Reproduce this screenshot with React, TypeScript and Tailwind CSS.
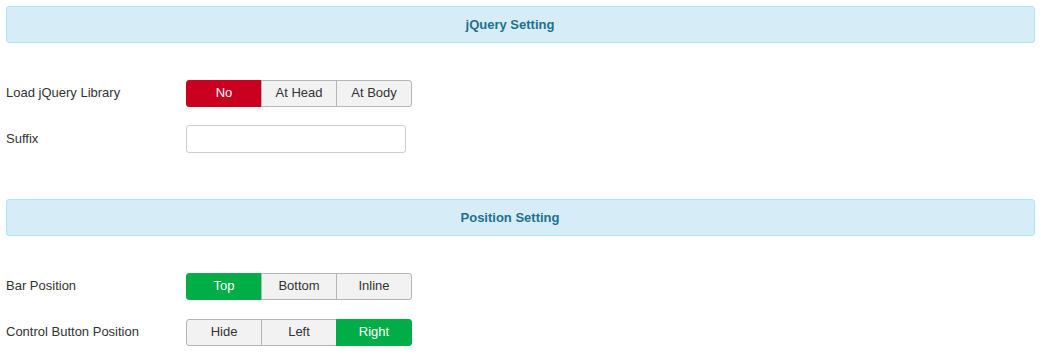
import React from 'react';

type Option = { label: string; active?: 'red' | 'green' };

const SectionHeader: React.FC<{ title: string }> = ({ title }) => (
  <div className="h-[37px] flex items-center justify-center pr-[21px] rounded-[3px] border border-[#b0e5f3] bg-[#d6edf7]">
    <span className="text-[13px] font-bold text-[#22708f]">{title}</span>
  </div>
);

const ButtonGroup: React.FC<{ options: Option[] }> = ({ options }) => (
  <div className="flex h-[27px]">
    {options.map((opt, i) => {
      const first = i === 0;
      const last = i === options.length - 1;
      let tone = 'bg-[#f2f2f2] text-[#333] border-[#b5b5b5]';
      if (opt.active === 'red') tone = 'bg-[#c9001f] text-white border-[#c9001f]';
      if (opt.active === 'green') tone = 'bg-[#00ad47] text-white border-[#00ad47]';
      return (
        <div
          key={opt.label}
          className={`flex items-center justify-center border text-[13px] ${tone} ${first ? 'w-[76px] rounded-l-[3px]' : 'w-[76px] -ml-px'} ${last ? 'rounded-r-[3px]' : ''}`}
        >
          {opt.label}
        </div>
      );
    })}
  </div>
);

const Row: React.FC<{ label: string; children: React.ReactNode }> = ({ label, children }) => (
  <div className="flex items-center h-[28px]">
    <div className="w-[180px] text-[13px] leading-[16px] text-[#333]">{label}</div>
    {children}
  </div>
);

export default function App() {
  return (
    <div className="w-[1041px] h-[357px] bg-white px-[6px] pt-[6px] font-['Liberation_Sans',Arial,sans-serif]">
      <SectionHeader title="jQuery Setting" />
      <div className="mt-[36px] flex flex-col gap-[18px]">
        <Row label="Load jQuery Library">
          <ButtonGroup options={[{ label: 'No', active: 'red' }, { label: 'At Head' }, { label: 'At Body' }]} />
        </Row>
        <Row label="Suffix">
          <input className="w-[220px] h-[28px] rounded-[3px] border border-[#ccc] bg-white outline-none" />
        </Row>
      </div>
      <div className="mt-[46px]">
        <SectionHeader title="Position Setting" />
      </div>
      <div className="mt-[36px] flex flex-col gap-[18px]">
        <Row label="Bar Position">
          <ButtonGroup options={[{ label: 'Top', active: 'green' }, { label: 'Bottom' }, { label: 'Inline' }]} />
        </Row>
        <Row label="Control Button Position">
          <ButtonGroup options={[{ label: 'Hide' }, { label: 'Left' }, { label: 'Right', active: 'green' }]} />
        </Row>
      </div>
    </div>
  );
}
